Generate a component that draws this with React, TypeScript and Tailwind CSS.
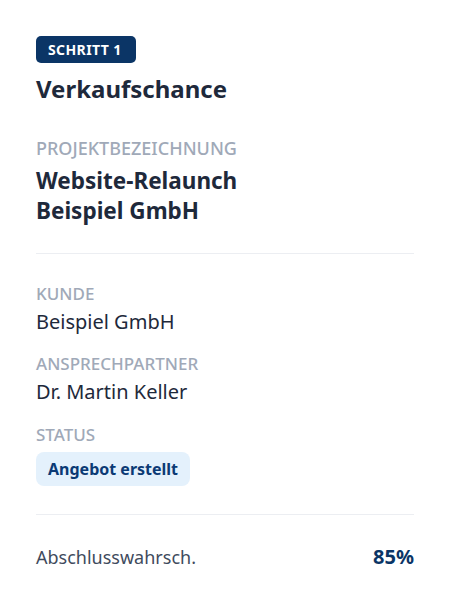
const labelCls = "text-[17px] font-medium uppercase leading-[22px] text-[#a0a9b8]";
const valueCls = "text-[20px] leading-[28px] text-[#1e293b]";

export default function App() {
  return (
    <div className="min-h-screen bg-white font-['Noto_Sans',sans-serif]">
      <div className="px-9 pt-9 pb-10">
        <span className="inline-flex h-[27px] items-center rounded-[5px] bg-[#0b3566] pl-3 pr-[14px] text-[14px] font-bold tracking-[0.4px] text-white">
          SCHRITT 1
        </span>
        <h1 className="mt-[10px] text-[24px] font-bold leading-[32px] text-[#1e293b]">Verkaufschance</h1>

        <div className="mt-[31px] text-[18px] font-medium uppercase leading-[24px] text-[#a0a9b8]">
          Projektbezeichnung
        </div>
        <div className="mt-[6px] text-[22.5px] font-bold leading-[30px] text-[#1e293b]">
          Website-Relaunch
          <br />
          Beispiel GmbH
        </div>

        <hr className="mt-[27px] border-t border-[#eceef2]" />

        <div className="mt-[29px] flex flex-col">
          <div className={labelCls}>Kunde</div>
          <div className={`mt-[3px] ${valueCls}`}>Beispiel GmbH</div>

          <div className={`mt-[17px] ${labelCls}`}>Ansprechpartner</div>
          <div className={`mt-[3px] ${valueCls}`}>Dr. Martin Keller</div>

          <div className={`mt-[18px] ${labelCls}`}>Status</div>
          <div className="mt-[6px]">
            <span className="inline-flex h-[34px] items-center rounded-[8px] bg-[#e4f1fc] px-3 text-[16px] font-bold text-[#0b3a75]">
              Angebot erstellt
            </span>
          </div>
        </div>

        <hr className="mt-[28px] border-t border-[#eceef2]" />

        <div className="mt-[28px] flex items-center justify-between">
          <span className="text-[18px] leading-[28px] text-[#3f4b5d]">Abschlusswahrsch.</span>
          <span className="text-[20px] font-bold leading-[28px] text-[#0b3566]">85%</span>
        </div>
      </div>
    </div>
  );
}
